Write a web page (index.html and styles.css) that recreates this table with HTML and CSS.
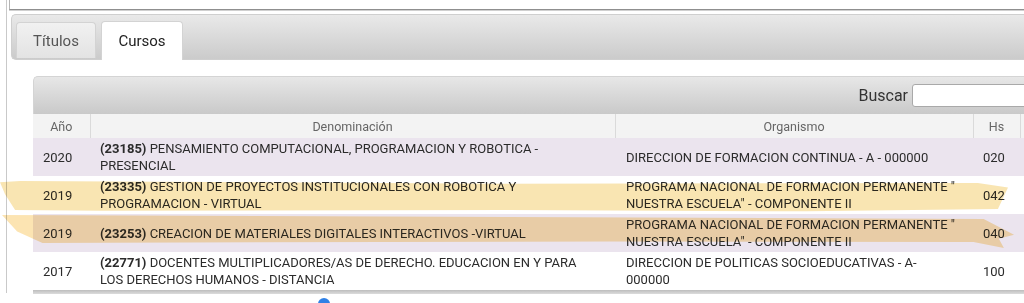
FILE: index.html
```html
<!DOCTYPE html>
<html lang="es">
<head>
<meta charset="utf-8">
<title>Cursos</title>
<link rel="stylesheet" href="styles.css">
</head>
<body>
<div class="page">
  <div class="topbox"></div>
  <div class="tabs">
    <div class="tab">Títulos</div>
    <div class="tab active">Cursos</div>
  </div>
  <div class="panel">
    <div class="toolbar">
      <label class="search">Buscar <input type="text"></label>
    </div>
    <table class="grid">
      <colgroup>
        <col class="c-anio"><col class="c-den"><col class="c-org"><col class="c-hs"><col class="c-x">
      </colgroup>
      <thead>
        <tr><th>Año</th><th>Denominación</th><th>Organismo</th><th>Hs</th><th></th></tr>
      </thead>
      <tbody>
        <tr class="odd">
          <td>2020</td>
          <td><b>(23185)</b> PENSAMIENTO COMPUTACIONAL, PROGRAMACION Y ROBOTICA - PRESENCIAL</td>
          <td>DIRECCION DE FORMACION CONTINUA - A - 000000</td>
          <td>020</td><td></td>
        </tr>
        <tr>
          <td>2019</td>
          <td><b>(23335)</b> GESTION DE PROYECTOS INSTITUCIONALES CON ROBOTICA Y PROGRAMACION - VIRTUAL</td>
          <td>PROGRAMA NACIONAL DE FORMACION PERMANENTE " NUESTRA ESCUELA" - COMPONENTE II</td>
          <td>042</td><td></td>
        </tr>
        <tr class="odd">
          <td>2019</td>
          <td><b>(23253)</b> CREACION DE MATERIALES DIGITALES INTERACTIVOS -VIRTUAL</td>
          <td>PROGRAMA NACIONAL DE FORMACION PERMANENTE " NUESTRA ESCUELA" - COMPONENTE II</td>
          <td>040</td><td></td>
        </tr>
        <tr>
          <td>2017</td>
          <td><b>(22771)</b> DOCENTES MULTIPLICADORES/AS DE DERECHO. EDUCACION EN Y PARA LOS DERECHOS HUMANOS - DISTANCIA</td>
          <td>DIRECCION DE POLITICAS SOCIOEDUCATIVAS - A- 000000</td>
          <td>100</td><td></td>
        </tr>
      </tbody>
    </table>
    <div class="footer"></div>
  </div>
  <div class="dot"></div>
</div>
<div class="mark mark-1"></div>
<div class="mark mark-2"></div>
</body>
</html>
```
FILE: styles.css
```css
html, body {
  margin: 0;
  padding: 0;
  background: #fff;
}
body {
  width: 1024px;
  height: 303px;
  overflow: hidden;
  position: relative;
  font-family: Roboto, "Liberation Sans", Arial, sans-serif;
  color: #2b2b2b;
}
.page {
  margin-left: 6px;
  height: 293px;
  border-left: 1px solid #c9c9c9;
  position: relative;
}
.topbox {
  margin-left: 2px;
  height: 9px;
  border-left: 1px solid #b5b5b5;
  border-bottom: 1px solid #8f8f8f;
  box-shadow: 0 1px 0 #d0d0d0;
}
.tabs {
  margin: 4px 0 0 4px;
  height: 44px;
  border: 1px solid #cfcfcf;
  border-right: none;
  border-radius: 5px 0 0 5px;
  background: linear-gradient(#e9e9e9, #cbcbcb);
  display: flex;
  align-items: flex-end;
  gap: 5px;
  padding-left: 4px;
  box-sizing: content-box;
}
.tab {
  height: 36px;
  padding: 0 16px;
  display: flex;
  align-items: center;
  font-size: 15px;
  color: #555;
  border: 1px solid #d3d3d3;
  border-bottom: none;
  border-radius: 4px 4px 0 0;
  background: linear-gradient(#f1f1f1, #e3e3e3);
  margin-bottom: 1px;
  box-sizing: border-box;
  width: 80px;
  justify-content: center;
}
.tab.active {
  background: #fff;
  color: #222;
  height: 39px;
  margin-bottom: -1px;
  width: 82px;
}
.panel {
  margin: 16px 0 0 26px;
}
.toolbar {
  height: 38px;
  border-top: 1px solid #d4d4d4;
  border-left: 1px solid #d4d4d4;
  border-radius: 5px 0 0 0;
  background: linear-gradient(#e7e7e7, #c9c9c9);
  display: flex;
  align-items: center;
  justify-content: flex-end;
  box-sizing: border-box;
  overflow: hidden;
}
.search {
  font-size: 16px;
  color: #333;
  display: flex;
  align-items: center;
  gap: 4px;
  margin-right: -98px;
}
.search input {
  width: 210px;
  height: 23px;
  box-sizing: border-box;
  border: 1px solid #a9a9a9;
  border-radius: 3px;
  background: #fff;
  margin: 0;
}
.grid {
  border-collapse: collapse;
  table-layout: fixed;
  width: 1100px;
  font-size: 13px;
}
.c-anio { width: 57px; }
.c-den { width: 525px; }
.c-org { width: 358px; }
.c-hs { width: 47px; }
.c-x { width: 113px; }
.grid th {
  height: 24px;
  padding: 0;
  font-weight: normal;
  font-size: 12.5px;
  color: #666;
  background: #f3f3f3;
  border-left: 1px solid #dadada;
  text-align: center;
}
.grid th:first-child { border-left: none; }
.grid td {
  height: 38px;
  padding: 1px 10px;
  box-sizing: border-box;
  line-height: 17px;
  vertical-align: middle;
  text-align: left;
}
.grid td:nth-child(2) { padding-right: 22px; }
.grid td:nth-child(3) { padding-left: 11px; }
.grid tr.odd td { background: #ebe4ee; }
.grid b { font-weight: bold; }
.footer {
  height: 4px;
  background: linear-gradient(#bdbdbd, #dcdcdc);
}
.dot {
  position: absolute;
  left: 311px;
  top: 298px;
  width: 12px;
  height: 12px;
  border-radius: 50%;
  background: #2f80e6;
}
.mark {
  position: absolute;
  mix-blend-mode: multiply;
  pointer-events: none;
}
.mark-1 {
  left: 0;
  top: 181px;
  width: 1008px;
  height: 33px;
  background: rgb(249, 229, 178);
  clip-path: polygon(0 4%, 2% 0, 50% 8%, 97% 6%, 100% 20%, 99% 85%, 80% 92%, 50% 88%, 10% 90%, 1.5% 88%, 0.5% 40%);
}
.mark-2 {
  left: 2px;
  top: 215px;
  width: 1012px;
  height: 33px;
  background: rgb(252, 228, 178);
  clip-path: polygon(0 0, 50% 6%, 97% 12%, 100% 60%, 98.5% 72%, 99% 100%, 96% 82%, 60% 80%, 10% 84%, 4% 85%, 1.5% 50%);
}
```
